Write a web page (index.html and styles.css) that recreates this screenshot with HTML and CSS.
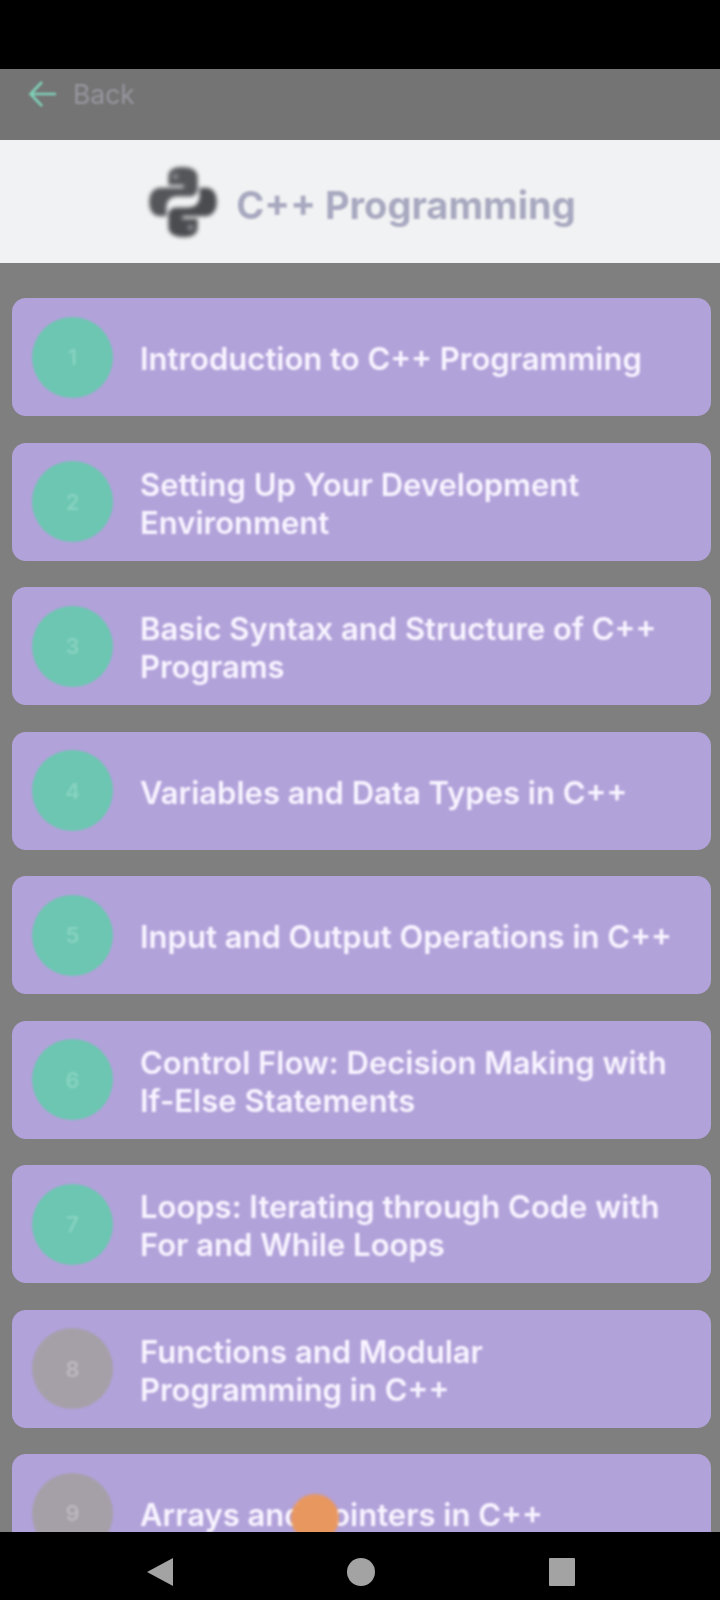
FILE: index.html
```html
<!DOCTYPE html>
<html lang="en">
<head>
    <meta charset="UTF-8">
    <meta name="viewport" content="width=device-width, initial-scale=1.0">
    <title>C++ Programming</title>
    <link rel="stylesheet" href="styles.css">
</head>
<body>
    <div class="screen">
        <div class="status-bar"></div>

        <div class="top-bar">
            <svg class="back-arrow" viewBox="0 0 30 30" width="30" height="30">
                <path d="M28 15H3M14 3L2.5 15L14 27" fill="none" stroke="#7fd0b8" stroke-width="2.6"/>
            </svg>
            <span class="back-label">Back</span>
        </div>

        <div class="course-header">
            <svg class="course-logo" viewBox="0 0 110 110" width="70" height="74" preserveAspectRatio="none">
                <path fill="#55565a" d="M54 3C36 3 32 10 32 18V30H56V34H20C9 34 2 42 2 55C2 68 8 76 19 76H29V63C29 53 36 47 46 47H66C73 47 78 42 78 35V18C78 9 70 3 54 3Z"/>
                <path fill="#4b4c50" d="M56 107C74 107 78 100 78 92V80H54V76H90C101 76 108 68 108 55C108 42 102 34 91 34H81V47C81 57 74 63 64 63H44C37 63 32 68 32 75V92C32 101 40 107 56 107Z"/>
                <circle cx="43" cy="17" r="4.5" fill="#8a8b90"/>
                <circle cx="67" cy="93" r="4.5" fill="#8a8b90"/>
            </svg>
            <h1 class="course-title">C++ Programming</h1>
        </div>

        <div class="lesson-list">
            <div class="lesson">
                <div class="lesson-num">1</div>
                <div class="lesson-name">Introduction to C++ Programming</div>
            </div>
            <div class="lesson">
                <div class="lesson-num">2</div>
                <div class="lesson-name">Setting Up Your Development Environment</div>
            </div>
            <div class="lesson">
                <div class="lesson-num">3</div>
                <div class="lesson-name">Basic Syntax and Structure of C++ Programs</div>
            </div>
            <div class="lesson">
                <div class="lesson-num">4</div>
                <div class="lesson-name">Variables and Data Types in C++</div>
            </div>
            <div class="lesson">
                <div class="lesson-num">5</div>
                <div class="lesson-name">Input and Output Operations in C++</div>
            </div>
            <div class="lesson">
                <div class="lesson-num">6</div>
                <div class="lesson-name">Control Flow: Decision Making with If-Else Statements</div>
            </div>
            <div class="lesson">
                <div class="lesson-num">7</div>
                <div class="lesson-name">Loops: Iterating through Code with For and While Loops</div>
            </div>
            <div class="lesson">
                <div class="lesson-num locked">8</div>
                <div class="lesson-name">Functions and Modular Programming in C++</div>
            </div>
            <div class="lesson">
                <div class="lesson-num locked">9</div>
                <div class="lesson-name">Arrays and Pointers in C++</div>
            </div>
            <div class="touch-dot"></div>
        </div>

        <div class="nav-bar">
            <svg viewBox="0 0 26 28" width="26" height="28"><path d="M26 0V28L0 14Z" fill="#a3a3a3"/></svg>
            <svg viewBox="0 0 28 28" width="28" height="28"><circle cx="14" cy="14" r="14" fill="#a3a3a3"/></svg>
            <svg viewBox="0 0 26 28" width="26" height="28"><rect width="26" height="28" rx="1" fill="#a3a3a3"/></svg>
        </div>
    </div>
</body>
</html>
```

FILE: styles.css
```css
body {
    margin: 0;
    background-color: #000;
    font-family: Inter, "Open Sans", sans-serif;
}

.screen {
    display: flex;
    flex-direction: column;
    height: 1600px;
    overflow: hidden;
    background-color: #7f7f7f;
}

.status-bar {
    height: 69px;
    flex: none;
    background-color: #000;
}

.top-bar {
    height: 71px;
    box-sizing: border-box;
    flex: none;
    display: flex;
    align-items: center;
    gap: 15px;
    padding: 0 0 21px 28px;
    background-color: #747474;
}

.back-arrow {
    filter: blur(1px);
}

.back-label {
    font-size: 26.5px;
    color: #96969f;
    filter: blur(1.2px);
}

.course-header {
    height: 123px;
    flex: none;
    display: flex;
    align-items: center;
    justify-content: center;
    gap: 18px;
    background-color: #f1f2f3;
}

.course-logo {
    margin-left: 4px;
    filter: blur(2px);
}

.course-title {
    margin: 6px 0 0;
    font-size: 38px;
    font-weight: 700;
    color: #a8a9c0;
    filter: blur(0.9px);
}

.lesson-list {
    position: relative;
    flex: 1;
    min-height: 0;
    overflow: hidden;
    display: flex;
    flex-direction: column;
    gap: 26.5px;
    padding: 35px 9px 0 12px;
}

.lesson {
    height: 118px;
    flex: none;
    display: flex;
    align-items: center;
    gap: 27px;
    padding-left: 20px;
    border-radius: 14px;
    background-color: #b2a2da;
}

.lesson-num {
    width: 81px;
    height: 81px;
    flex: none;
    display: flex;
    align-items: center;
    justify-content: center;
    border-radius: 50%;
    font-size: 22px;
    font-weight: 600;
    color: #88d3c2;
    background-color: #6cc6b1;
    filter: blur(1px);
}

.lesson-num.locked {
    color: #bdb8c0;
    background-color: #a5a0a8;
}

.lesson-name {
    max-width: 540px;
    margin-top: 4px;
    font-size: 31px;
    font-weight: 600;
    line-height: 38px;
    color: #f8f4ff;
    filter: blur(0.9px);
}

.touch-dot {
    position: absolute;
    left: 291px;
    top: 1231px;
    width: 48px;
    height: 48px;
    border-radius: 50%;
    background-color: #e8975f;
    filter: blur(1.5px);
}

.nav-bar {
    height: 68px;
    flex: none;
    display: flex;
    align-items: center;
    padding: 12px 145px 0 147px;
    box-sizing: border-box;
    justify-content: space-between;
    background-color: #000;
    position: relative;
}
```
